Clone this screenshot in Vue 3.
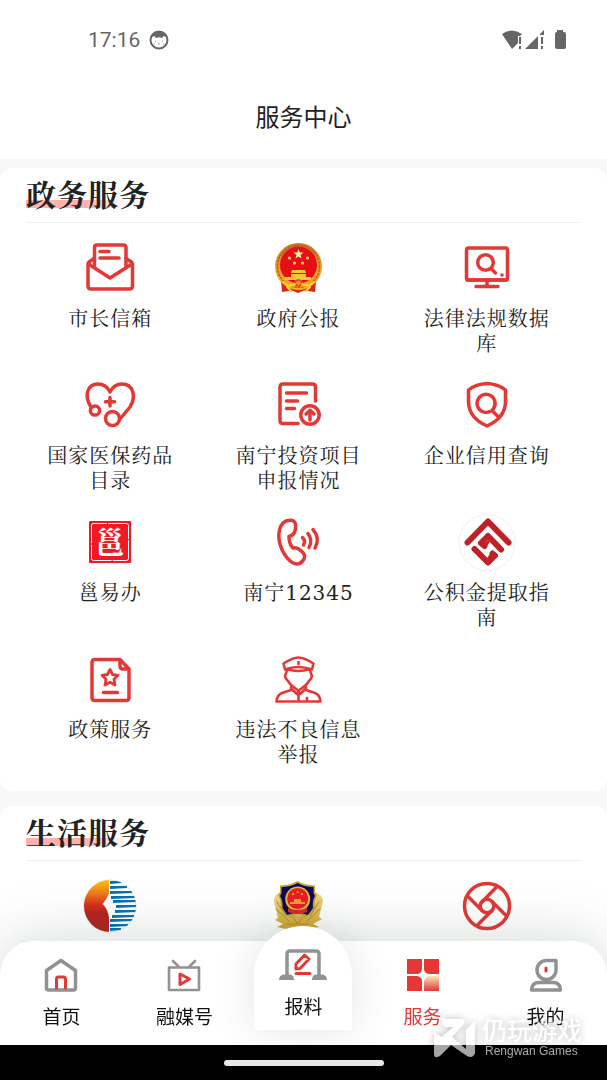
<template>
  <div class="page">
    <!-- 图标定义 -->
    <svg class="sprite" aria-hidden="true">
      <defs>
        <linearGradient id="g-emblem" x1="0" y1="0" x2="0" y2="1">
          <stop offset="0" stop-color="#c9732a" />
          <stop offset="0.5" stop-color="#eb9a28" />
          <stop offset="1" stop-color="#f2b020" />
        </linearGradient>
        <linearGradient id="g-sun" x1="0" y1="0" x2="0" y2="1">
          <stop offset="0" stop-color="#fbc400" />
          <stop offset="0.25" stop-color="#ec7f1c" />
          <stop offset="0.48" stop-color="#dc2b1c" />
          <stop offset="0.65" stop-color="#b0241f" />
          <stop offset="1" stop-color="#b0241f" />
        </linearGradient>
        <linearGradient id="g-gold" x1="0" y1="0" x2="0" y2="1">
          <stop offset="0" stop-color="#efd98c" />
          <stop offset="1" stop-color="#d3a531" />
        </linearGradient>
        <linearGradient id="g-tab" x1="0" y1="0" x2="0" y2="1">
          <stop offset="0" stop-color="#fbe3b4" />
          <stop offset="1" stop-color="#e23836" />
        </linearGradient>
        <clipPath id="c-sun"><circle cx="25" cy="25" r="26" /></clipPath>
      </defs>

      <symbol id="mail" viewBox="0 0 50 50">
        <path d="M9.500 24V4.500Q9.500 2 12 2H38Q41 2 41 4.500V24" />
        <path d="M9 15.500L4 19Q3 20 3 21V43Q3 46 6 46H44.500Q47.500 46 47.500 43V21Q47.500 20 46.500 19L41 15.500M3.500 21L25 35L47 21" />
        <path d="M15 8.500H24M15 15H34" />
      </symbol>

      <symbol id="emblem" viewBox="0 0 50 50">
        <g stroke="none">
          <path d="M8 38L9 49L19 47.500L25 50L31 47.500L42 49L43 38Z" fill="#d8261c" />
          <circle cx="25.500" cy="23.500" r="23.500" fill="url(#g-emblem)" />
          <circle cx="25.500" cy="22" r="18.500" fill="#e60f17" />
          <path d="M25.500 6L26.800 9.600H30.500L27.500 12L28.600 15.600L25.500 13.400L22.400 15.600L23.500 12L20.500 9.600H24.200Z" fill="#fff3a0" />
          <g fill="#ffd84a">
            <circle cx="16.500" cy="15" r="1.600" /><circle cx="34.500" cy="15" r="1.600" />
            <circle cx="21.500" cy="20" r="1.600" /><circle cx="29.500" cy="20" r="1.600" />
          </g>
          <path d="M19 27H32L33 30H18ZM18 31H33V34H38V37H12V34H18Z" fill="#f8c638" />
          <circle cx="25.500" cy="40" r="4" fill="#e8961e" />
        </g>
        <g stroke="#e0361f" stroke-width="1.200" fill="none">
          <circle cx="25.500" cy="23.500" r="21" stroke="#b5541c" stroke-dasharray="1.500 2" />
          <circle cx="25.500" cy="40" r="3" />
          <path d="M10 39Q17 45 22 41M41 39Q34 45 29 41M14 44L18 48M37 44L33 48" stroke="#ffd12e" stroke-width="2" />
        </g>
      </symbol>

      <symbol id="monitor" viewBox="0 0 50 50">
        <rect x="4.500" y="5" width="41" height="32" rx="2" />
        <path d="M5 37H45M25 38V43M14 43.500H36" />
        <circle cx="23.500" cy="19.500" r="7.800" />
        <path d="M29.500 26L33.500 30" />
        <circle cx="40" cy="32" r="1.800" class="solid" />
      </symbol>

      <symbol id="heart" viewBox="0 0 50 50">
        <path d="M6 27C-1 16 2 4 13 4Q21 4 25 12Q29 4 37 4C49 4 51 18 45 27L35 39" />
        <circle cx="10" cy="30.500" r="4.600" />
        <circle cx="27.500" cy="38.500" r="7" />
        <path d="M25 17.500V26M20.500 21.800H29.500" />
      </symbol>

      <symbol id="report" viewBox="0 0 50 50">
        <path d="M42.500 21V7Q42.500 4 39.500 4H10Q7 4 7 7V40.500Q7 43.500 10 43.500H25" />
        <path d="M13.500 13H33.500M13.500 21H24.500M13.500 28.500H21.500" />
        <circle cx="37" cy="35" r="9.200" />
        <path d="M37 40V30.500M33 34L37 30.300L41 34" />
      </symbol>

      <symbol id="shield" viewBox="0 0 50 50">
        <path d="M25 3.500Q36 4 43.500 10V22Q43 38 25 46Q7 38 6.500 22V10Q14 4 25 3.500Z" />
        <path d="M28 31.500A9 9 0 1 1 31.500 28.500L30 30.500L37 37.500" />
      </symbol>

      <symbol id="seal" viewBox="0 0 50 50">
        <rect x="4" y="4" width="42" height="42" rx="1" fill="#ed1c24" stroke="none" />
        <rect x="6.500" y="6.500" width="37" height="37" rx="2" stroke="#fff" stroke-width="1" stroke-dasharray="13 2 20 1" fill="none" />
        <text x="25" y="36" class="seal-text">邕</text>
      </symbol>

      <symbol id="phone" viewBox="0 0 50 50">
        <path d="M15 3.500C7 5 4 16 7 27C10 38 18 47 24 47Q28 47 31 42Q33 37 27 33Q24 30 20 31Q16 27 16 19.500Q21 18 22 14C24 7 22 2 15 3.500Z" />
        <path d="M29.500 20.500Q33 24 30.500 28M35 16.500Q40 23.500 36 30.500M40 12.500Q47.500 21 42 31" />
      </symbol>

      <symbol id="fund" viewBox="-4 -4 58 58">
        <circle cx="25" cy="25.500" r="28" stroke="#f0f0f0" stroke-width="1" fill="#fff" />
        <g stroke="#c02126" stroke-width="6" fill="none">
          <path d="M5.500 25.500L26 4.500L46.500 25.500" />
          <path d="M39 32.500L26 19L19 26L22.500 29" />
          <path d="M23 29L26 25" stroke-width="3" />
          <path d="M12.500 32L26 45.500L33 38.500L30.500 36.500" />
          <path d="M30 37L27 41" stroke-width="3" />
        </g>
      </symbol>

      <symbol id="policy" viewBox="0 0 50 50">
        <path d="M35 5.500H10Q7 5.500 7 8.500V43.500Q7 46.500 10 46.500H41Q44 46.500 44 43.500V15Z" />
        <path d="M35 6V12Q35 15 38 15H43" />
        <path d="M25 15.500L27.500 20.500L33 21.300L29 25.200L30 31L25 28.200L20 31L21 25.200L17 21.300L22.500 20.500Z" stroke-width="2.800" />
        <path d="M18.500 38.500H32.500" />
      </symbol>

      <symbol id="police" viewBox="0 0 50 50">
        <g stroke-width="2.600">
          <path d="M10.500 9.500Q20 3.500 25.500 3.500Q31 3.500 40.500 9.500L39 15.500Q25 10.500 12 15.500Z" />
          <path d="M14 15Q25 19 37 15M14 16Q13 20 12 22Q12.500 25 15 27Q18 32 25.500 36.500Q33 32 36 27Q38.500 25 39 22Q38 20 37 16" />
          <path d="M25.500 8V10" />
          <path d="M18 33V36L9 39Q4 41 3.500 47.500H47.500Q47 41 42 39L33 36V33M18.500 35L24 40L25.500 37L27 40L32.500 35M25.500 39V47M34 44V46" />
        </g>
      </symbol>

      <symbol id="sun" viewBox="-4 -4 58 58">
        <circle cx="25" cy="25" r="26" fill="#fff" stroke="#dde3e8" stroke-width="1" />
        <g clip-path="url(#c-sun)" stroke="none">
          <path d="M24 -1H-1V51H24V37Q23 28 17.500 23Q22 18 24 12Z" fill="url(#g-sun)" />
          <path
            v-for="(bar, i) in sunBars"
            :key="i"
            :d="`M${bar[0]} ${bar[1]}H${bar[2]}V${bar[1] + 2}L${bar[0]} ${bar[1] + 3}Z`"
            fill="#0872b0"
          />
        </g>
      </symbol>

      <symbol id="badge" viewBox="0 0 50 50">
        <g stroke="none">
          <path d="M7 12Q1 13 1 20L5 37L2 39L10 43L4 46Q18 50 25 46Q32 50 46 46L40 43L49 38L46 36L50 20Q49 13 43 12Z" fill="url(#g-gold)" />
          <path d="M24.500 0Q31 4 42 4.500V11L44 14Q41 19 42 27L38 32L33 36L24.500 33L17 36L12 32L8 27Q8 19 5 14L7 11V4.500Q18 4 24.500 0Z" fill="#c6a23c" />
          <path d="M24.500 2Q31 6 40.500 6V12L42 15Q39 20 40 27L35 34L24.500 31L14 34L9.500 27Q10 20 7 15L8.500 12V6Q18 6 24.500 2Z" fill="#0b0857" />
          <circle cx="24.700" cy="18" r="12.500" fill="#e2ba3c" />
          <circle cx="24.700" cy="17.500" r="10.500" fill="#ed1c24" />
          <path d="M24.700 9L26 12H23.500ZM19 12H21V14H19ZM28 12H30V14H28ZM21 18H28V21H32V23H17V21H21Z" fill="#e9a13b" />
          <path d="M15 27Q25 31 34 27V31Q25 35 15 31Z" fill="#d9292a" />
        </g>
        <path d="M4 21L13 35M3 28L16 40M46 21L37 35M47 28L34 40M20 36L24.500 43L30 36M13 43H36" stroke="#b98c20" stroke-width="1" />
      </symbol>

      <symbol id="aperture" viewBox="0 0 50 50">
        <circle cx="25" cy="25" r="22.500" />
        <circle cx="25" cy="25" r="6.800" />
        <path d="M35 5.500L19.500 21.500M5.500 15L20 29.500M15 44.500L30.500 29M44.500 35L30 20.500" />
      </symbol>

      <symbol id="tab-home" viewBox="0 0 34 34">
        <path d="M2.500 12.500L17 2.500L31.500 12.500V30Q31.500 32 29.500 32H4.500Q2.500 32 2.500 30Z" />
        <path d="M12.500 30V21Q12.500 19 14.500 19H19.500Q21.500 19 21.500 21V30" class="accent" />
      </symbol>
      <symbol id="tab-video" viewBox="0 0 34 34">
        <path d="M2 9.500H32V32H2ZM6 3L12 9M28 3L22 9" stroke-width="2.600" />
        <path d="M13 16L22.500 21L13 26.500Z" class="accent" />
      </symbol>
      <symbol id="tab-report" viewBox="0 0 48 34">
        <path d="M8 28V6Q8 3 11 3H37Q40 3 40 6V28" />
        <path d="M0 32Q0 27 5 26.500H11Q15 27 15 32ZM33 32Q33 27 37 26.500H43Q48 27 48 32Z" fill="#929292" stroke="none" />
        <path d="M17 21V16L25.500 7L30 11L21 20.500ZM17 25.500H31" class="accent" />
      </symbol>
      <symbol id="tab-service" viewBox="0 0 34 34">
        <g fill="#e23836" stroke="none">
          <path d="M1 1H16V11Q15 16 11 16H1ZM18 1H33V16H23Q18 15 18 11ZM1 18H11Q16 19 16 23V33H1Z" />
          <path d="M23 18H33V33H18V23Q19 19 23 18Z" fill="url(#g-tab)" />
        </g>
      </symbol>
      <symbol id="tab-mine" viewBox="0 0 34 34">
        <path d="M27 2.500V12A9.500 9.500 0 1 1 17.500 2.500ZM2.500 32Q3 24.500 10 24.500H24Q31 24.500 31.500 32Z" />
        <path d="M17 10V13" class="accent" />
      </symbol>
    </svg>

    <div class="status">
      <div class="status-side">
        <span>17:16</span>
        <svg class="face" viewBox="0 0 20 20">
          <circle cx="10" cy="10" r="8.500" fill="#fff" stroke="#666" stroke-width="2" />
          <path d="M3 7Q4 1 10 1T17 7L14.500 6L13 8Q10 6.500 7 8L5.500 6Z" fill="#666" />
          <path d="M6 11H7M13 11H14M9 14H11M5 14H6M14 14H15" stroke="#999" fill="none" />
        </svg>
      </div>
      <svg class="signals" viewBox="0 0 66 20">
        <path d="M1 4Q11 -3 21 4L19 6H17V13L11 19Z" />
        <path d="M18 7H20V14H18ZM18 16H20V19H18ZM24 19L37 6V19ZM39 4L43 0V5H39ZM40 7H42V14H40ZM40 16H42V19H40ZM56 2V0H62V2H63Q65 2 65 4V17Q65 19 63 19H56Q54 19 54 17V4Q54 2 56 2Z" />
      </svg>
    </div>

    <header class="header">
      <h1>服务中心</h1>
    </header>

    <main class="content">
      <section v-for="group in groups" :key="group.title" class="card">
        <div class="card-head">
          <h2>{{ group.title }}</h2>
        </div>
        <div class="grid">
          <a v-for="item in group.items" :key="item.icon" href="#" class="service" :aria-label="item.name || item.icon">
            <svg class="icon" :class="{ large: item.large }"><use :href="'#' + item.icon" /></svg>
            <span class="name">{{ item.name }}</span>
          </a>
        </div>
      </section>
    </main>

    <nav class="bottom">
      <div class="tabs">
        <button
          v-for="tab in tabs"
          :key="tab.icon"
          type="button"
          class="tab"
          :class="{ active: current === tab.icon, raised: tab.raised }"
          @click="current = tab.icon"
        >
          <svg class="tab-icon"><use :href="'#' + tab.icon" /></svg>
          <span>{{ tab.name }}</span>
        </button>
      </div>
      <div class="gesture"><span class="gesture-bar"></span></div>
    </nav>

    <div class="watermark">
      <svg viewBox="0 0 42 40">
        <path d="M8 1H27Q33 2 29 7L18 19L32 31V12L41 2V35Q39 41 33 38L17 27L6 38Q0 41 0 36V14L8 19L19 9H12Q7 7 8 1Z" />
      </svg>
      <div>
        <p class="wm-name">仍玩游戏</p>
        <p class="wm-sub">Rengwan Games</p>
      </div>
    </div>
  </div>
</template>

<script setup>
import { ref } from 'vue';

const current = ref('tab-service');

const groups = [
  {
    title: '政务服务',
    items: [
      { icon: 'mail', name: '市长信箱' },
      { icon: 'emblem', name: '政府公报' },
      { icon: 'monitor', name: '法律法规数据库' },
      { icon: 'heart', name: '国家医保药品目录' },
      { icon: 'report', name: '南宁投资项目申报情况' },
      { icon: 'shield', name: '企业信用查询' },
      { icon: 'seal', name: '邕易办' },
      { icon: 'phone', name: '南宁12345' },
      { icon: 'fund', name: '公积金提取指南', large: true },
      { icon: 'policy', name: '政策服务' },
      { icon: 'police', name: '违法不良信息举报' },
    ],
  },
  {
    title: '生活服务',
    items: [
      { icon: 'sun', name: '', large: true },
      { icon: 'badge', name: '' },
      { icon: 'aperture', name: '' },
    ],
  },
];

const tabs = [
  { icon: 'tab-home', name: '首页' },
  { icon: 'tab-video', name: '融媒号' },
  { icon: 'tab-report', name: '报料', raised: true },
  { icon: 'tab-service', name: '服务' },
  { icon: 'tab-mine', name: '我的' },
];

// 每条横纹: [左, 上, 右]
const sunBars = [
  [25, 0, 37], [25, 5, 42], [25, 10, 48], [26, 15, 50], [28, 19, 51], [31, 24, 52],
  [30, 29, 51], [27, 34, 50], [25, 38, 47], [25, 43, 43], [25, 47, 36],
];
</script>

<style>
body { background: #f8f8fb; }
</style>

<style scoped>
.page {
  position: relative;
  height: 100vh;
  overflow: hidden;
  background: #f8f8fb;
  color: #222;
  font-family: Roboto, "Noto Sans CJK SC", sans-serif;
}

.sprite { position: absolute; width: 0; height: 0; }

/* 状态栏 */
.status {
  display: flex; justify-content: space-between; align-items: center;
  height: 80px; padding: 0 40px 0 88px;
  background: #fff; color: #666; font-size: 21px;
}
.status-side { display: flex; align-items: center; gap: 9px; }
.face { width: 20px; height: 20px; }
.signals { width: 66px; height: 20px; fill: #666; }

.header {
  display: flex; justify-content: center; align-items: center;
  height: 75px; padding-bottom: 4px; background: #fff;
}
.header h1 { margin: 0; font-size: 24px; line-height: 32px; font-weight: 400; }

.content { display: flex; flex-direction: column; gap: 15px; padding-top: 9px; }

.card { padding: 12px 26px 23px; border-radius: 12px; background: #fff; }
.card-head { padding-bottom: 14px; border-bottom: 1px solid #f0f0f2; }
.card-head h2 {
  width: fit-content; height: 28px; margin: 0;
  background: linear-gradient(90deg, #ffb1ad 60%, rgba(255, 177, 173, 0)) left bottom / 100px 8px no-repeat;
  font-family: "Noto Serif CJK SC", "Noto Sans CJK SC", serif;
  font-size: 30px; line-height: 26px; font-weight: 700; letter-spacing: 1px;
}

.grid {
  display: grid; grid-template-columns: repeat(3, 1fr);
  row-gap: 23px; margin: 20px 0 0 -10px;
}
.service {
  display: flex; flex-direction: column; align-items: center; gap: 14px;
  color: #222; text-decoration: none;
}
.icon {
  width: 50px; height: 50px;
  fill: none; stroke: #e23836; stroke-width: 3.5;
  stroke-linecap: round; stroke-linejoin: round;
}
.icon.large { width: 58px; height: 58px; margin: -4px; }
.solid { fill: #e23836; stroke: none; }
.seal-text {
  fill: #fff; stroke: none; text-anchor: middle;
  font-family: "Noto Serif CJK SC", "Noto Sans CJK SC", serif; font-size: 30px; font-weight: 700;
}
.name {
  width: 136px; min-height: 50px;
  font-family: "DejaVu Serif", "Noto Serif CJK SC", "Noto Sans CJK SC", serif;
  font-size: 20px; line-height: 25px; letter-spacing: 1px; text-align: center;
}

/* 底部导航 */
.bottom { position: fixed; right: 0; bottom: 0; left: 0; }
.tabs {
  display: grid; grid-template-columns: 16fr 16fr 15fr 16fr 16fr;
  height: 104px; border-radius: 34px 34px 0 0; background: #fff;
  box-shadow: 0 0 60px rgba(50, 80, 55, 0.22);
}
.tab {
  display: flex; flex-direction: column; align-items: center; gap: 12px;
  padding: 17px 0 0; border: 0; background: none; color: #111;
  font-family: "Noto Sans CJK SC", sans-serif; font-size: 19px; line-height: 24px;
}
.tab.active { color: #e23836; }
.tab.raised {
  justify-self: center; width: 98px; height: 104px; margin-top: -15px;
  padding-top: 22px;
  border-radius: 49px 49px 0 0; background: #fff;
  box-shadow: 0 0 40px rgba(50, 80, 55, 0.14);
}
.tab-icon {
  width: 34px; height: 34px;
  fill: none; stroke: #929292; stroke-width: 3.5;
  stroke-linecap: round; stroke-linejoin: round;
}
.raised .tab-icon { width: 48px; }
.accent { stroke: #e23836; stroke-width: 3; }

.gesture {
  display: flex; justify-content: center; align-items: center;
  height: 35px; background: #000;
}
.gesture-bar { width: 160px; height: 6px; border-radius: 3px; background: #e8e8e8; }

.watermark {
  position: fixed; right: 25px; bottom: 20px;
  display: flex; align-items: center; gap: 6px;
  color: #fff; opacity: 0.65; pointer-events: none;
  filter: drop-shadow(0 0 4px rgba(0, 0, 0, 0.4));
}
.watermark svg { width: 42px; height: 40px; fill: #fff; }
.watermark p { margin: 0; white-space: nowrap; }
.wm-name { font-family: "Noto Sans CJK SC", sans-serif; font-size: 25px; line-height: 26px; font-weight: 500; }
.wm-sub { padding-left: 3px; font-family: "Liberation Sans", sans-serif; font-size: 12px; line-height: 18px; }
</style>
